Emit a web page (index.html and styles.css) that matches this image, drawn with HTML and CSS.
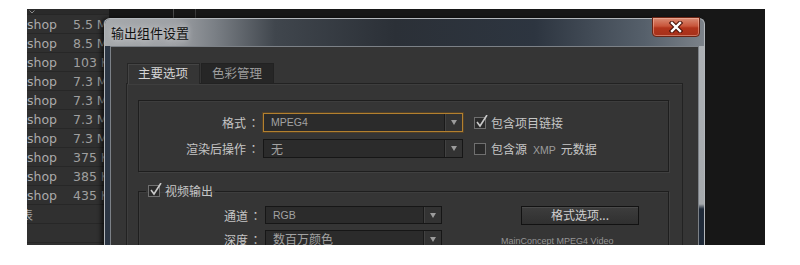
FILE: index.html
```html
<!DOCTYPE html>
<html lang="zh-CN">
<head>
    <meta charset="UTF-8">
    <meta name="viewport" content="width=device-width, initial-scale=1.0">
    <title>输出组件设置</title>
    <link rel="stylesheet" href="styles.css">
</head>
<body>
    <div class="screen">
        <div class="file-list">
            <div class="list-head"><svg width="6" height="4" viewBox="0 0 6 4"><path d="M0.5 0.5 L3 3 L5.5 0.5" fill="none" stroke="#8a8a8a" stroke-width="1"/></svg></div>
            <div class="file-row"><span class="file-kind">shop</span><span class="file-size">5.5 MB</span></div>
            <div class="file-row"><span class="file-kind">shop</span><span class="file-size">8.5 MB</span></div>
            <div class="file-row"><span class="file-kind">shop</span><span class="file-size">103 KB</span></div>
            <div class="file-row"><span class="file-kind">shop</span><span class="file-size">7.3 MB</span></div>
            <div class="file-row"><span class="file-kind">shop</span><span class="file-size">7.3 MB</span></div>
            <div class="file-row"><span class="file-kind">shop</span><span class="file-size">7.3 MB</span></div>
            <div class="file-row"><span class="file-kind">shop</span><span class="file-size">7.3 MB</span></div>
            <div class="file-row"><span class="file-kind">shop</span><span class="file-size">375 KB</span></div>
            <div class="file-row"><span class="file-kind">shop</span><span class="file-size">385 KB</span></div>
            <div class="file-row"><span class="file-kind">shop</span><span class="file-size">435 KB</span></div>
            <div class="file-row"><span class="file-kind cut">表</span></div>
            <div class="file-row"></div>
        </div>

        <div class="dialog">
            <div class="title-bar">
                <span class="title">输出组件设置</span>
                <button class="close-btn">
                    <svg width="14" height="12" viewBox="0 0 14 12">
                        <path d="M3 2 L11 10 M11 2 L3 10" stroke="#4a1208" stroke-width="4.5" stroke-linecap="square"/>
                        <path d="M3 2 L11 10 M11 2 L3 10" stroke="#ffffff" stroke-width="2.4" stroke-linecap="square"/>
                    </svg>
                </button>
            </div>

            <div class="dialog-body">
                <div class="tabs">
                    <div class="tab active">主要选项</div>
                    <div class="tab">色彩管理</div>
                </div>

                <div class="tab-panel">
                    <div class="group format-group">
                        <span class="field-label">格式<span class="colon">：</span></span>
                        <div class="select focused">
                            <span class="value latin">MPEG4</span>
                            <span class="arrow-btn"><i class="arrow"></i></span>
                        </div>
                        <span class="check">
                            <span class="box">
                                <svg width="14" height="14" viewBox="0 0 14 14"><path d="M2 7 L5 11 L12 0" fill="none" stroke="#c9c9c9" stroke-width="1.6"/></svg>
                            </span>
                            <span>包含项目链接</span>
                        </span>

                        <span class="field-label">渲染后操作<span class="colon">：</span></span>
                        <div class="select">
                            <span class="value">无</span>
                            <span class="arrow-btn"><i class="arrow"></i></span>
                        </div>
                        <span class="check">
                            <span class="box"></span>
                            <span>包含源<span class="xmp">XMP</span>元数据</span>
                        </span>
                    </div>

                    <fieldset class="group video-group">
                        <legend>
                            <span class="check">
                                <span class="box">
                                    <svg width="14" height="14" viewBox="0 0 14 14"><path d="M2 7 L5 11 L12 0" fill="none" stroke="#c9c9c9" stroke-width="1.6"/></svg>
                                </span>
                                <span>视频输出</span>
                            </span>
                        </legend>
                        <div class="video-grid">
                            <span class="field-label">通道<span class="colon">：</span></span>
                            <div class="select short">
                                <span class="value latin">RGB</span>
                                <span class="arrow-btn"><i class="arrow"></i></span>
                            </div>
                            <button class="format-btn">格式选项...</button>

                            <span class="field-label">深度<span class="colon">：</span></span>
                            <div class="select short">
                                <span class="value">数百万颜色</span>
                                <span class="arrow-btn"><i class="arrow"></i></span>
                            </div>
                            <span class="codec">MainConcept MPEG4 Video</span>
                        </div>
                    </fieldset>
                </div>
            </div>
        </div>
    </div>
</body>
</html>
```

FILE: styles.css
```css
:root {
    --panel: #353535;
    --panel-line: #1e1e1e;
    --label: #c6c6c6;
    --field: #2b2b2b;
}

* {
    box-sizing: border-box;
}

body {
    margin: 0;
    background: #fff;
    font-family: "Noto Sans CJK SC", sans-serif;
}

.screen {
    position: relative;
    width: 738px;
    height: 236px;
    margin: 9px 0 0 27px;
    overflow: hidden;
    background:
        linear-gradient(90deg, transparent 146px, #4a4a4a 146px 147px, transparent 147px 168px, #3a3a3a 168px 169px, transparent 169px) top left / 100% 9px no-repeat,
        #171717;
}

/* file list behind the dialog */

.file-list {
    width: 82px;
    height: 100%;
    overflow: hidden;
    background: #303030;
}

.list-head {
    display: flex;
    align-items: center;
    height: 6px;
    padding-left: 2px;
    border-bottom: 1px solid #262626;
    background: #2a2a2a;
}

.file-row {
    display: flex;
    align-items: center;
    height: 19px;
    padding-top: 1px;
    border-bottom: 1px solid #272727;
    font-family: "DejaVu Sans", sans-serif;
    font-size: 12.5px;
    color: #ababab;
    white-space: nowrap;
}

.file-kind {
    flex-shrink: 0;
    width: 46px;
}

.file-kind.cut {
    margin-left: -6px;
    font-family: "Noto Sans CJK SC", sans-serif;
    font-size: 12px;
}

.file-size {
    color: #9f9f9f;
}

/* dialog window */

.dialog {
    position: absolute;
    left: 77px;
    top: 9px;
    width: 601px;
    height: 240px;
    display: flex;
    flex-direction: column;
    padding: 0 5px;
    border: 1px solid #b3b7bb;
    border-bottom: none;
    border-radius: 6px 6px 0 0;
    background:
        linear-gradient(90deg, #2c3644 0 50%, transparent 50%),
        linear-gradient(180deg, #aeb2b6 0, #a5a9ad 185px, #1f2a39 190px);
    box-shadow: -3px 0 4px rgba(0, 0, 0, 0.6);
}

.title-bar {
    display: flex;
    justify-content: space-between;
    align-items: flex-start;
    height: 27px;
    margin: 0 -5px;
    padding: 0 4px 0 6px;
    border-radius: 5px 5px 0 0;
    background: linear-gradient(90deg, #a6a9ac 0, #9ea1a5 70px, #7a7f85 110px, #40464d 170px, #2b3037 290px, #2d3540 430px, #56606b 540px, #7d838a 600px);
}

.title {
    font-size: 13px;
    line-height: 27px;
    color: #111;
    text-shadow: 0 0 6px rgba(255, 255, 255, 0.7);
}

.close-btn {
    width: 48px;
    height: 20px;
    margin-top: -2px;
    padding: 0;
    display: flex;
    align-items: center;
    justify-content: center;
    border: 1px solid #6b2414;
    border-radius: 0 0 4px 4px;
    background: linear-gradient(180deg, #d98b74 0, #c8553a 45%, #b2351c 55%, #a5301a 100%);
    box-shadow: inset 0 0 0 1px rgba(255, 200, 180, 0.45);
}

.dialog-body {
    flex: 1;
    padding: 16px 0 0 15px;
    background: var(--panel);
    border: 1px solid #7c8187;
    border-bottom: none;
}

/* tabs */

.tabs {
    display: flex;
    height: 20px;
    margin-left: 1px;
}

.tab {
    height: 20px;
    padding: 0 11px 0 10px;
    border: 1px solid #222;
    border-bottom: none;
    font-size: 12.5px;
    line-height: 18px;
    color: #9c9c9c;
    background: #262626;
    margin-left: 1px;
}

.tab.active {
    margin-left: 0;
    position: relative;
    height: 21px;
    margin-bottom: -1px;
    color: #d4d4d4;
    background: var(--panel);
    border-color: #262626;
    box-shadow: inset 1px 1px 0 #444;
}

.tab-panel {
    width: 557px;
    height: 200px;
    padding: 16px 13px 0 11px;
    border: 1px solid #222;
    border-bottom: none;
    box-shadow: inset 1px 1px 0 #3e3e3e;
}

/* group boxes */

.group {
    border: 1px solid var(--panel-line);
    box-shadow: 1px 1px 0 #404040, inset 1px 1px 0 #3d3d3d;
}

.format-group {
    display: grid;
    grid-template-columns: 124px 200px 1fr;
    grid-auto-rows: 19px;
    row-gap: 7px;
    align-items: center;
    height: 72px;
    padding-top: 12px;
}

.field-label {
    padding-right: 2px;
    text-align: right;
    font-size: 12px;
    color: var(--label);
    white-space: nowrap;
}

.colon {
    display: inline-block;
    width: 15px;
    text-align: center;
    font-family: "Noto Sans CJK JP", sans-serif;
}

.select {
    display: flex;
    height: 19px;
    border: 1px solid #161616;
    background: var(--field);
    color: #a2a2a2;
    font-size: 12px;
}

.select.focused {
    border-color: #b3802f;
    box-shadow: 0 0 0 1px rgba(110, 75, 25, 0.5);
}

.select .value {
    flex: 1;
    padding-left: 7px;
    line-height: 17px;
}

.select .value.latin {
    font-family: "Liberation Sans", sans-serif;
    font-size: 10.5px;
}

.arrow-btn {
    width: 18px;
    display: flex;
    align-items: center;
    justify-content: center;
    border-left: 1px solid #1a1a1a;
    background: #333;
    box-shadow: inset 1px 0 0 #424242;
}

.arrow {
    width: 0;
    height: 0;
    border-left: 3.5px solid transparent;
    border-right: 3.5px solid transparent;
    border-top: 5px solid #9c9c9c;
}

.check {
    display: flex;
    align-items: center;
    gap: 5px;
    margin-left: 11px;
    font-size: 12px;
    color: var(--label);
    white-space: nowrap;
}

.box {
    position: relative;
    width: 12px;
    height: 12px;
    border: 1px solid #6f6f6f;
    background: #2a2a2a;
}

.box svg {
    position: absolute;
    left: 0;
    top: -3px;
}

.xmp {
    margin: 0 5px 0 6px;
    font-family: "Liberation Sans", sans-serif;
    font-size: 10.5px;
    color: #9c9c9c;
}

.video-group {
    margin: 11px 0 0;
    padding: 7px 0 0;
    min-width: 0;
    height: 80px;
}

.video-group legend {
    margin-left: 7px;
    padding: 0 2px;
    line-height: 16px;
}

.video-group .check {
    margin-left: 0;
}

.video-grid {
    display: grid;
    grid-template-columns: 126px 177px 1fr;
    grid-auto-rows: 18px;
    row-gap: 6px;
    align-items: center;
}

.select.short {
    height: 18px;
}

.select.short .value {
    line-height: 16px;
}

.format-btn {
    width: 118px;
    height: 19px;
    margin-left: 79px;
    padding: 0;
    border: 1px solid #121212;
    background: linear-gradient(180deg, #3d3d3d, #303030);
    box-shadow: inset 0 1px 0 #4a4a4a;
    font-family: "Noto Sans CJK SC", sans-serif;
    font-size: 12px;
    line-height: 16px;
    color: #d0d0d0;
}

.codec {
    margin: 3px 0 0 59px;
    font-family: "Liberation Sans", sans-serif;
    font-size: 9px;
    color: #969696;
    white-space: nowrap;
}
```
